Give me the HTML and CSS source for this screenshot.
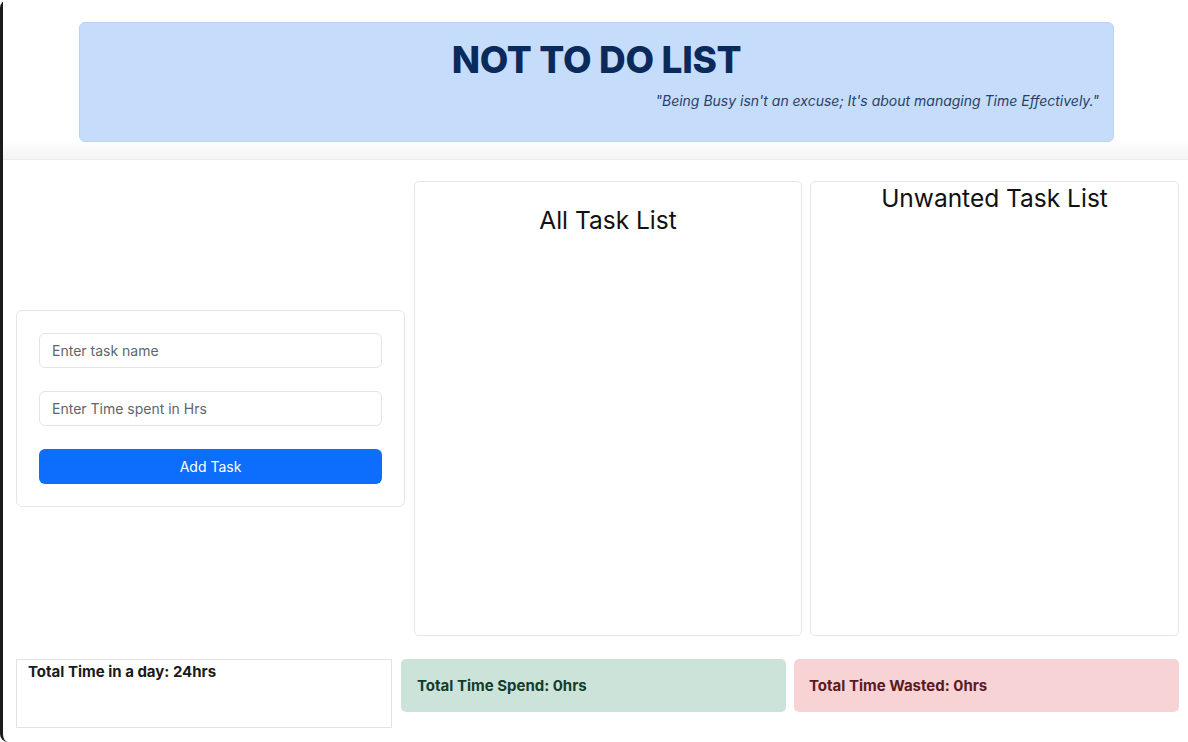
FILE: index.html
```html
<!DOCTYPE html>
<html lang="en">
<head>
<meta charset="utf-8">
<title>Not To Do List</title>
<link rel="stylesheet" href="styles.css">
</head>
<body>
<div class="page">
  <header class="top">
    <div class="banner">
      <h1 class="title">NOT TO DO LIST</h1>
      <p class="quote">"Being Busy isn't an excuse; It's about managing Time Effectively."</p>
    </div>
  </header>
  <main class="main">
    <section class="cols">
      <div class="form-col">
        <form class="form-card">
          <input class="field" type="text" placeholder="Enter task name">
          <input class="field" type="text" placeholder="Enter Time spent in Hrs">
          <button class="btn" type="button">Add Task</button>
        </form>
      </div>
      <div class="list-card list-all">
        <h2 class="list-title">All Task List</h2>
      </div>
      <div class="list-card list-bad">
        <h2 class="list-title">Unwanted Task List</h2>
      </div>
    </section>
    <section class="totals">
      <div class="total total-day">Total Time in a day: 24hrs</div>
      <div class="total total-spend">Total Time Spend: 0hrs</div>
      <div class="total total-waste">Total Time Wasted: 0hrs</div>
    </section>
  </main>
</div>
</body>
</html>
```

FILE: styles.css
```css
* { box-sizing: border-box; }
html, body { margin: 0; padding: 0; background: #ffffff; }
body {
  font-family: Inter, "Liberation Sans", sans-serif;
  color: #212529;
  overflow: hidden;
}
.page {
  width: 1188px;
  height: 742px;
  border-left: 3px solid #1c1c1c;
  border-top-left-radius: 8px;
  border-bottom-left-radius: 8px;
  background: #ffffff;
  display: flex;
  flex-direction: column;
}
.top {
  height: 159px;
  padding: 22px 74px 0 76px;
  background: linear-gradient(to bottom, #ffffff 0, #ffffff 140px, #f4f4f4 159px);
}
.banner {
  height: 120px;
  background: #c6dcfb;
  border: 1px solid #b9d2f6;
  border-radius: 6px;
  padding: 13px 14px 0 14px;
}
.title {
  margin: 0;
  text-align: center;
  font-size: 37px;
  line-height: 48px;
  font-weight: 800;
  color: #0b2a5c;
  letter-spacing: -0.3px;
}
.quote {
  margin: 7px 0 0 0;
  text-align: right;
  font-size: 14px;
  line-height: 20px;
  font-style: italic;
  color: #2b3f66;
}
.main {
  flex: 1;
  border-top: 1px solid #ececec;
  padding: 21px 7px 0 13px;
}
.cols {
  display: grid;
  grid-template-columns: 389px 388px 368px;
  column-gap: 9px;
  height: 455px;
}
.cols > .list-bad { margin-left: -1px; }
.form-col {
  display: flex;
  align-items: center;
}
.form-card {
  width: 100%;
  border: 1px solid #e6e6e6;
  border-radius: 6px;
  padding: 22px;
  display: flex;
  flex-direction: column;
  gap: 23px;
  background: #fff;
}
.field {
  height: 35px;
  border: 1px solid #e2e4e7;
  border-radius: 6px;
  padding: 0 12px;
  font-family: inherit;
  font-size: 14px;
  color: #212529;
  background: #fff;
}
.field::placeholder { color: #5f656b; }
.btn {
  height: 35px;
  border: none;
  border-radius: 6px;
  background: #0d6efd;
  color: #ffffff;
  font-family: inherit;
  font-size: 14px;
}
.list-card {
  border: 1px solid #e6e6e6;
  border-radius: 5px;
  background: #fff;
}
.list-title {
  margin: 0;
  text-align: center;
  font-weight: 400;
  font-size: 24.5px;
  line-height: 30px;
  color: #111111;
}
.list-all { padding-top: 23px; }
.list-bad { padding-top: 1px; }
.totals {
  margin-top: 23px;
  display: grid;
  grid-template-columns: 376px 385px 384px;
  column-gap: 9px;
  align-items: start;
}
.totals > .total-waste { margin-left: -1px; }
.total {
  font-size: 15px;
  font-weight: 700;
  line-height: 20px;
  border-radius: 5px;
}
.total-day {
  height: 69px;
  border: 1px solid #e3e3e3;
  border-radius: 0;
  padding: 2px 11px;
  color: #1a1a1a;
}
.total-spend {
  height: 53px;
  background: #cce3da;
  color: #123d2b;
  padding: 17px 16px;
}
.total-waste {
  height: 53px;
  background: #f7d3d6;
  color: #5a1a22;
  padding: 17px 15px;
}
```
